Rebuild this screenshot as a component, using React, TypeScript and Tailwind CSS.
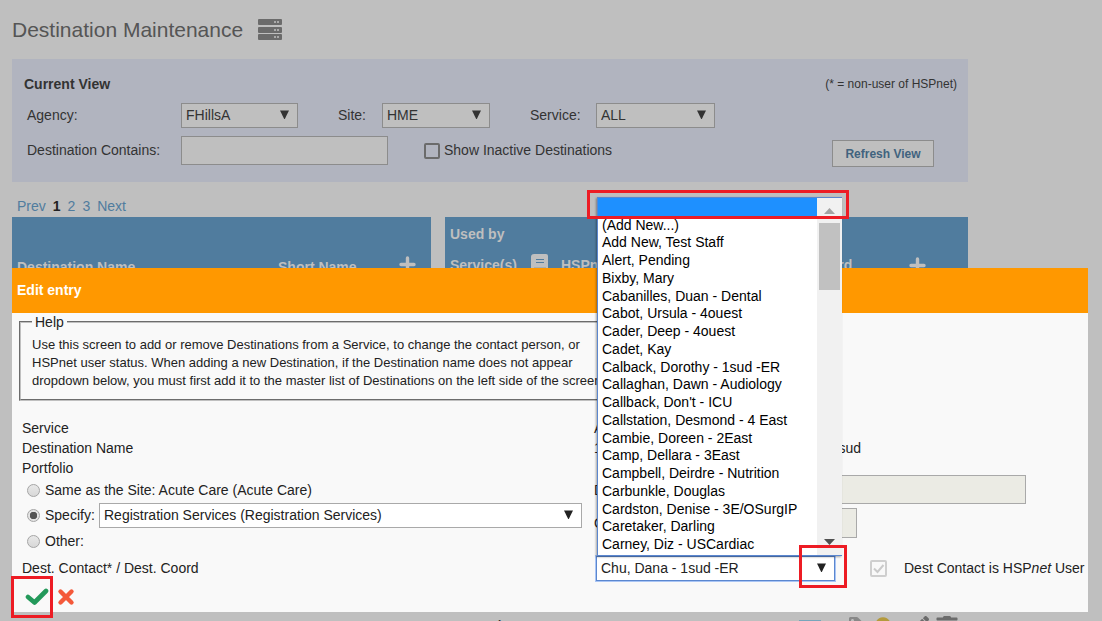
import { useState } from "react";
import type { ReactNode } from "react";
import { FaCircle, FaPencilAlt, FaTag, FaTrashAlt } from "react-icons/fa";

const CONTACTS = [
  "",
  "(Add New...)",
  "Add New, Test Staff",
  "Alert, Pending",
  "Bixby, Mary",
  "Cabanilles, Duan - Dental",
  "Cabot, Ursula - 4ouest",
  "Cader, Deep - 4ouest",
  "Cadet, Kay",
  "Calback, Dorothy - 1sud -ER",
  "Callaghan, Dawn - Audiology",
  "Callback, Don't - ICU",
  "Callstation, Desmond - 4 East",
  "Cambie, Doreen - 2East",
  "Camp, Dellara - 3East",
  "Campbell, Deirdre - Nutrition",
  "Carbunkle, Douglas",
  "Cardston, Denise - 3E/OSurgIP",
  "Caretaker, Darling",
  "Carney, Diz - USCardiac",
];

const SERVICE_ROWS = [1, 2, 3, 4, 5, 6, 7];

const Triangle = ({ className }: { className: string }) => (
  <svg viewBox="0 0 9 9" aria-hidden="true" className={className}>
    <path d="M0 0.500H9L4.800 9H4.200Z" fill="currentColor" />
  </svg>
);

type SelectBoxProps = {
  id: string;
  value: string;
  width: string;
  look: string;
  children?: ReactNode;
};

const SelectBox = ({ id, value, width, look, children }: SelectBoxProps) => (
  <div className={`relative ${width}`}>
    <select
      id={id}
      defaultValue={value}
      className={`block h-[25px] w-full appearance-none border pb-px pl-1 text-sm leading-5 outline-none ${look}`}
    >
      <option>{value}</option>
    </select>
    <Triangle className="pointer-events-none absolute top-[7px] right-[9px] h-[9px] w-[9px]" />
    {children}
  </div>
);

const DIM_SELECT = "border-[#8c8c8c] bg-[#bfbfbf] text-[#333]";

const ServerIcon = () => (
  <svg viewBox="0 0 24 22" aria-hidden="true" className="h-[22px] w-6">
    {[0, 8, 15].map((y) => (
      <g key={y}>
        <rect x="0" y={y} width="24" height="6" rx="1" fill="#6b6b6b" />
        <path
          d={`M16 ${y + 3}h2M17 ${y + 2}v2M19 ${y + 3}h2M20 ${y + 2}v2`}
          stroke="#bfbfbf"
          strokeWidth="1"
        />
      </g>
    ))}
  </svg>
);

const PlusIcon = () => (
  <svg viewBox="0 0 17 17" role="img" aria-label="Add" className="h-[17px] w-[17px]">
    <path
      d="M8.500 2v13M2 8.500h13"
      stroke="currentColor"
      strokeWidth="3.400"
      strokeLinecap="round"
    />
  </svg>
);

const BookIcon = () => (
  <svg viewBox="0 0 17 18" aria-hidden="true" className="h-[18px] w-[17px]">
    <path
      d="M3 0H15Q17 0 17 2V15L16 18H3Q0 18 0 15V3Q0 0 3 0Z"
      fill="currentColor"
    />
    <path d="M5 5.500h8M5 8.500h8" stroke="#507c9e" strokeWidth="1" />
    <path d="M3 14.500h12" stroke="#507c9e" strokeWidth="1.500" />
  </svg>
);

const CurrentView = () => (
  <section className="max-w-[956px] bg-[#b1b4bf] pt-4 pb-[17px] text-[#333]">
    <div className="mb-[10px] flex h-[18px] items-center justify-between pr-[11px] pl-3">
      <h2 className="font-bold">Current View</h2>
      <span className="text-xs">(* = non-user of HSPnet)</span>
    </div>
    <div className="mb-2 flex items-center pl-[15px]">
      <label htmlFor="agency" className="w-[154px] pb-[2px]">
        Agency:
      </label>
      <SelectBox id="agency" value="FHillsA" width="w-[117px]" look={DIM_SELECT} />
      <label htmlFor="site" className="ml-10 w-11 pb-[2px]">
        Site:
      </label>
      <SelectBox id="site" value="HME" width="w-[108px]" look={DIM_SELECT} />
      <label htmlFor="service" className="ml-10 w-[66px] pb-[2px]">
        Service:
      </label>
      <SelectBox id="service" value="ALL" width="w-[119px]" look={DIM_SELECT} />
    </div>
    <div className="flex items-center pr-[34px] pl-[15px]">
      <label htmlFor="contains" className="w-[154px] pb-[2px]">
        Destination Contains:
      </label>
      <input
        id="contains"
        type="text"
        className="h-[29px] w-[207px] border border-[#8c8c8c] bg-[#bfbfbf] px-1"
      />
      <input
        id="inactive"
        type="checkbox"
        className="ml-9 h-4 w-4 appearance-none rounded-xs border-2 border-[#6b6b6b]"
      />
      <label htmlFor="inactive" className="ml-1 pb-[2px]">
        Show Inactive Destinations
      </label>
      <button
        type="button"
        className="mt-1 -mb-0.5 ml-auto h-[27px] w-[102px] border border-[#8c8c8c] bg-[#bfbfbf] text-xs font-bold text-[#41637e]"
      >
        Refresh View
      </button>
    </div>
  </section>
);

const Pager = () => (
  <nav className="flex h-[35px] gap-[7px] pt-[14px] pl-[5px] text-[#507c9e]">
    <a href="#prev">Prev</a>
    <span className="font-bold text-[#222]">1</span>
    <a href="#2">2</a>
    <a href="#3">3</a>
    <a href="#next">Next</a>
  </nav>
);

const DestinationTables = () => (
  <div className="flex max-w-[956px] items-start gap-[14px]">
    <table className="w-[419px] table-fixed">
      <thead className="bg-[#507c9e] text-left text-[#bfbfbf]">
        <tr className="h-[60px] align-bottom">
          <th className="w-[261px] pl-[5px]">Destination Name</th>
          <th className="pl-[5px]">Short Name</th>
          <th className="w-8 pb-1">
            <PlusIcon />
          </th>
        </tr>
      </thead>
    </table>
    <table className="flex-1 table-fixed">
      <thead className="bg-[#507c9e] text-left text-[#bfbfbf]">
        <tr className="h-[33px]">
          <th colSpan={5} className="pl-[5px]">
            Used by
          </th>
        </tr>
        <tr className="h-[30px] align-middle">
          <th className="w-[86px] pl-[5px]">Service(s)</th>
          <th className="w-[30px] pb-1">
            <BookIcon />
          </th>
          <th className="w-[232px]">HSPnet User</th>
          <th className="w-[116px] pl-[18px]">Coord</th>
          <th>
            <PlusIcon />
          </th>
        </tr>
      </thead>
      <tbody>
        {SERVICE_ROWS.map((row) => (
          <tr key={row} className="h-14 align-top">
            <td colSpan={3} className="pl-[5px] font-bold">
              Screen/Pre
            </td>
            <td colSpan={2}>
              <div className="flex items-start gap-[10px] pl-[6px] text-[#6b6b6b]">
                <span className="mt-1 mr-[18px] h-3 w-[22px] bg-[#78a5bb]" />
                <FaTag className="mt-px size-4 text-[#888]" />
                <FaCircle className="mt-px size-4 text-[#b49a3c]" />
                <span className="ml-3 flex gap-[6px]">
                  <FaPencilAlt className="size-4" />
                  <FaTrashAlt className="size-6" />
                </span>
              </div>
            </td>
          </tr>
        ))}
      </tbody>
    </table>
  </div>
);

const ContactMenu = () => (
  <div className="absolute bottom-full left-px flex h-[359px] w-[245px] border-t border-b border-l border-[#5b87cf] bg-white text-black shadow-[-1px_1px_2px_rgba(0,0,0,0.35)]">
    <ul role="listbox" aria-label="Contacts" className="flex flex-1 flex-col pb-[2px] leading-4">
      {CONTACTS.map((name, i) => (
        <li
          key={i}
          role="option"
          aria-selected={i === 0}
          className="flex min-h-0 flex-1 items-center pl-1 whitespace-nowrap aria-selected:bg-[#1e90ff]"
        >
          {name}
        </li>
      ))}
    </ul>
    <div className="flex w-[25px] flex-col items-center bg-[#f1f1f1]">
      <svg viewBox="0 0 11 6" aria-hidden="true" className="mt-[10px] h-[6px] w-[11px]">
        <path d="M5.500 0L11 6H0Z" fill="#a3a3a3" />
      </svg>
      <span className="mt-[9px] h-[67px] w-[21px] bg-[#c1c1c1]" />
      <svg viewBox="0 0 11 6" aria-hidden="true" className="mt-auto mb-[10px] h-[6px] w-[11px]">
        <path d="M0 0H11L5.500 6Z" fill="#505050" />
      </svg>
    </div>
    <span className="pointer-events-none absolute -top-2 -left-[11px] h-[29px] w-[262px] border-3 border-[#ed1c24]" />
  </div>
);

const RADIO =
  "h-[13px] w-[13px] appearance-none rounded-full border border-[#a5a5a5] bg-linear-to-b from-[#e8e8e8] to-[#d8d8d8] checked:bg-radial checked:from-[#555] checked:from-45% checked:to-[#e4e4e4] checked:to-50%";

const EditEntry = () => {
  const [portfolio, setPortfolio] = useState("specify");

  const radio = (value: string) => (
    <input
      id={value}
      type="radio"
      name="portfolio"
      checked={portfolio === value}
      onChange={() => setPortfolio(value)}
      className={RADIO}
    />
  );

  return (
    <section className="absolute top-[268px] right-[14px] left-3 bg-[#f9f9f9] text-[#222]">
      <h2 className="flex h-[45px] items-center bg-[#ff9800] pb-px pl-[5px] font-bold text-white">
        Edit entry
      </h2>
      <fieldset className="ml-[7px] max-w-[780px] border-2 border-[#c0c0c0] px-[11px] pb-[9px] [border-style:groove]">
        <legend className="px-[3px] leading-[18px]">Help</legend>
        <p className="pt-[5px] text-[13px] leading-[18px] whitespace-nowrap">
          Use this screen to add or remove Destinations from a Service, to change the contact person, or
          <br />
          HSPnet user status. When adding a new Destination, if the Destination name does not appear
          <br />
          dropdown below, you must first add it to the master list of Destinations on the left side of the screen
        </p>
      </fieldset>

      <div className="mt-[17px] flex pl-[10px]">
        <div className="w-[572px] leading-5">
          <div>Service</div>
          <div>Destination Name</div>
          <div>Portfolio</div>
          <div className="flex h-6 items-center gap-[5px] pl-[5px]">
            {radio("same")}
            <label htmlFor="same">Same as the Site: Acute Care (Acute Care)</label>
          </div>
          <div className="flex h-[26px] items-center gap-[5px] pl-[5px]">
            {radio("specify")}
            <label htmlFor="specify" className="w-[49px]">
              Specify:
            </label>
            <SelectBox
              id="portfolio-list"
              value="Registration Services (Registration Services)"
              width="w-[483px]"
              look="border-[#a9a9a9] bg-white text-[#222]"
            />
          </div>
          <div className="flex h-[26px] items-center gap-[5px] pl-[5px]">
            {radio("other")}
            <label htmlFor="other">Other:</label>
          </div>
        </div>
        <div className="leading-5">
          <div>Acute Care</div>
          <div className="flex w-[267px] justify-between">
            <span>1sud</span>
            <span>1sud</span>
          </div>
          <div className="mt-[17px] flex items-center">
            <label htmlFor="phone" className="w-[110px]">
              Dest. Phone
            </label>
            <input
              id="phone"
              disabled
              className="h-[29px] w-[322px] border border-[#a9a9a9] bg-[#ebebe4]"
            />
          </div>
          <div className="mt-1 flex items-center">
            <label htmlFor="order" className="w-[110px]">
              Order
            </label>
            <input
              id="order"
              disabled
              className="h-[30px] w-[153px] border border-[#a9a9a9] bg-[#ebebe4]"
            />
          </div>
        </div>
      </div>

      <div className="mt-[2px] flex items-center pl-[10px]">
        <label htmlFor="contact" className="w-[574px] pb-[2px]">
          Dest. Contact* / Dest. Coord
        </label>
        <SelectBox
          id="contact"
          value="Chu, Dana - 1sud -ER"
          width="w-[239px]"
          look="border-[#5b87cf] bg-white text-[#222] ring-1 ring-[#a9c5f5]"
        >
          <ContactMenu />
          <span className="pointer-events-none absolute -top-[11px] -right-3 h-[43px] w-[48px] border-3 border-[#ed1c24]" />
        </SelectBox>
        <span className="relative ml-[35px] h-[17px] w-[17px]">
          <input
            id="hspnet"
            type="checkbox"
            disabled
            defaultChecked
            className="block h-full w-full appearance-none rounded-xs border-2 border-[#cfcfcf]"
          />
          <svg viewBox="0 0 17 17" aria-hidden="true" className="absolute inset-0">
            <path d="M4 8.500L7.500 12L13.500 5" fill="none" stroke="#cacaca" strokeWidth="2" />
          </svg>
        </span>
        <label htmlFor="hspnet" className="ml-[17px] pb-[2px]">
          Dest Contact is HSP<i>net</i> User
        </label>
      </div>

      <div className="flex h-[31px] items-center gap-2 pl-[13px]">
        <button type="button" aria-label="Save" className="relative">
          <svg viewBox="0 0 24 18" className="h-[18px] w-6">
            <path
              d="M3 9L9.500 14.500L21 3"
              fill="none"
              stroke="#23995a"
              strokeWidth="4.600"
              strokeLinecap="round"
              strokeLinejoin="round"
            />
          </svg>
          <span className="pointer-events-none absolute -top-3 -left-[14px] h-[42px] w-[42px] border-3 border-[#ed1c24]" />
        </button>
        <button type="button" aria-label="Cancel">
          <svg viewBox="0 0 18 18" className="h-[18px] w-[18px]">
            <path
              d="M3.500 3.500L14.500 14.500M14.500 3.500L3.500 14.500"
              stroke="#f4593a"
              strokeWidth="4.400"
              strokeLinecap="round"
            />
          </svg>
        </button>
      </div>
    </section>
  );
};

const App = () => (
  <main className="relative h-screen overflow-hidden bg-[#bfbfbf] pr-[14px] pl-3 font-['Liberation_Sans',Arial,sans-serif] text-sm text-[#333]">
    <header className="flex h-[59px] items-center gap-[15px]">
      <h1 className="text-[21px] text-[#555]">Destination Maintenance</h1>
      <ServerIcon />
    </header>
    <CurrentView />
    <Pager />
    <DestinationTables />
    <EditEntry />
  </main>
);

export default App;
